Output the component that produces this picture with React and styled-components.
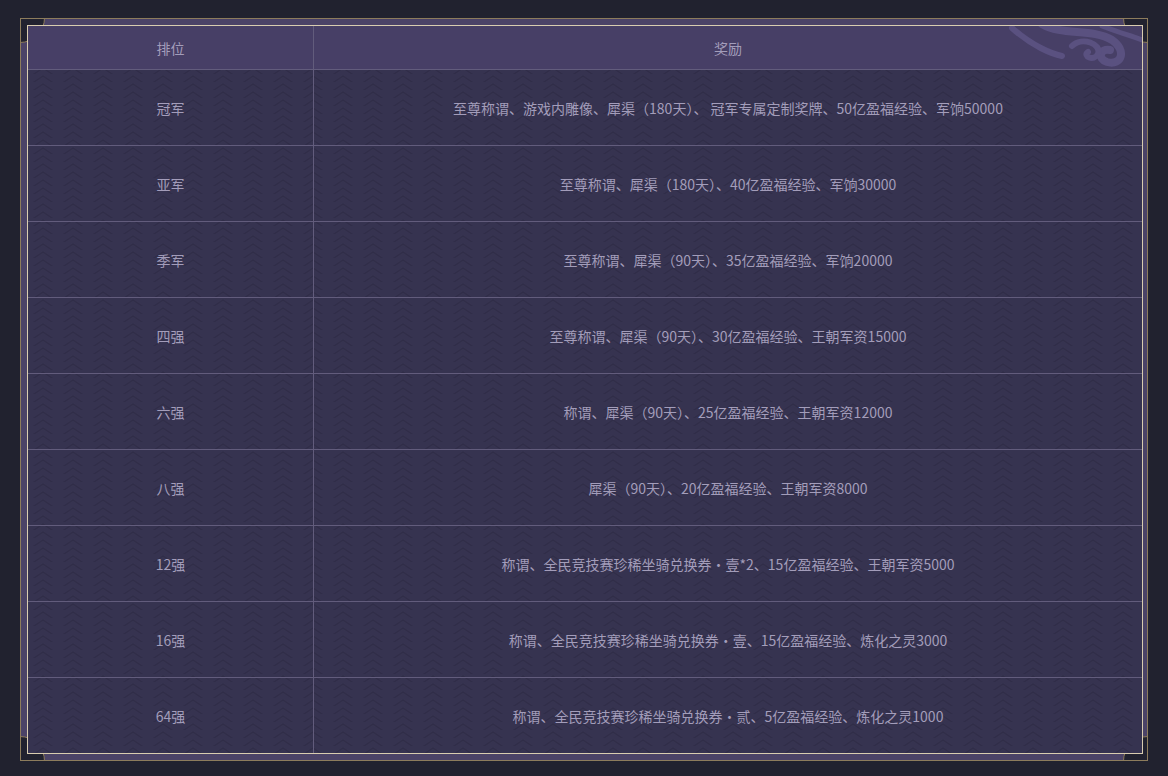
import React from 'react'
import styled, { createGlobalStyle } from 'styled-components'

const Global = createGlobalStyle`
    html, body {
        margin: 0;
        background: #21222f;
        font-family: "Microsoft YaHei", "Noto Sans CJK SC", "Noto Sans", sans-serif;
    }
`

const zigzag = encodeURIComponent(
    `<svg xmlns="http://www.w3.org/2000/svg" width="30" height="8"><path d="M0 12 L15 2 L30 12" fill="none" stroke="#302d48" stroke-width="1.4"/></svg>`
)

const Page = styled.div`
    padding: 18px 20px 16px 20px;
`

const Frame = styled.div`
    position: relative;
    overflow: hidden;
    border: 1px solid #8d7c5c;
    background: #4b4367;
    padding: 6px 4px 6px 6px;
`

const Notch = styled.div`
    position: absolute;
    width: 48px;
    height: 48px;
    border-radius: 50%;
    border: 1px solid #8d7c5c;
    background: #21222f;
    z-index: 0;
    top: ${p => (p.$bottom ? 'auto' : '-26px')};
    bottom: ${p => (p.$bottom ? '-26px' : 'auto')};
    left: ${p => (p.$right ? 'auto' : '-26px')};
    right: ${p => (p.$right ? '-26px' : 'auto')};
`

const Table = styled.div`
    position: relative;
    z-index: 1;
    border: 1px solid #d9cdb0;
    background: #363350 url("data:image/svg+xml,${zigzag}");
    color: #a39dba;
    font-size: 14px;
`

const Row = styled.div`
    display: grid;
    grid-template-columns: 285px 1fr;
    height: ${p => (p.$head ? '43px' : '75px')};
    background: ${p => (p.$head ? '#473f66' : 'transparent')};
    border-top: ${p => (p.$first ? 'none' : '1px solid #625c7c')};
    position: relative;
    overflow: hidden;
`

const Cell = styled.div`
    display: flex;
    align-items: center;
    justify-content: center;
    & + & {
        border-left: 1px solid #625c7c;
    }
`

const Cloud = styled.svg`
    position: absolute;
    right: 0;
    top: 0;
`

const rows = [
    ['冠军', '至尊称谓、游戏内雕像、犀渠（180天）、 冠军专属定制奖牌、50亿盈福经验、军饷50000'],
    ['亚军', '至尊称谓、犀渠（180天）、40亿盈福经验、军饷30000'],
    ['季军', '至尊称谓、犀渠（90天）、35亿盈福经验、军饷20000'],
    ['四强', '至尊称谓、犀渠（90天）、30亿盈福经验、王朝军资15000'],
    ['六强', '称谓、犀渠（90天）、25亿盈福经验、王朝军资12000'],
    ['八强', '犀渠（90天）、20亿盈福经验、王朝军资8000'],
    ['12强', '称谓、全民竞技赛珍稀坐骑兑换券·壹*2、15亿盈福经验、王朝军资5000'],
    ['16强', '称谓、全民竞技赛珍稀坐骑兑换券·壹、15亿盈福经验、炼化之灵3000'],
    ['64强', '称谓、全民竞技赛珍稀坐骑兑换券·贰、5亿盈福经验、炼化之灵1000'],
]

export default function App() {
    return (
        <Page>
            <Global />
            <Frame>
                <Notch />
                <Notch $right />
                <Notch $bottom />
                <Notch $bottom $right />
                <Table>
                    <Row $head $first>
                        <Cell>排位</Cell>
                        <Cell>奖励</Cell>
                        <Cloud width="140" height="43" viewBox="0 0 140 43">
                            <g fill="none" stroke="#5a5180" strokeLinecap="round">
                                <path d="M10 2 C 30 20, 50 28, 60 30" strokeWidth="6" />
                                <path d="M40 -2 C 60 10, 90 2, 110 14 C 125 24, 120 40, 105 36 C 95 33, 98 22, 108 24" strokeWidth="8" />
                                <path d="M70 20 C 80 10, 100 18, 96 28 C 92 36, 80 30, 86 26" strokeWidth="6" />
                                <path d="M100 0 C 115 6, 130 10, 140 14" strokeWidth="5" />
                            </g>
                        </Cloud>
                    </Row>
                    {rows.map(([rank, reward]) => (
                        <Row key={rank}>
                            <Cell>{rank}</Cell>
                            <Cell>{reward}</Cell>
                        </Row>
                    ))}
                </Table>
            </Frame>
        </Page>
    )
}
